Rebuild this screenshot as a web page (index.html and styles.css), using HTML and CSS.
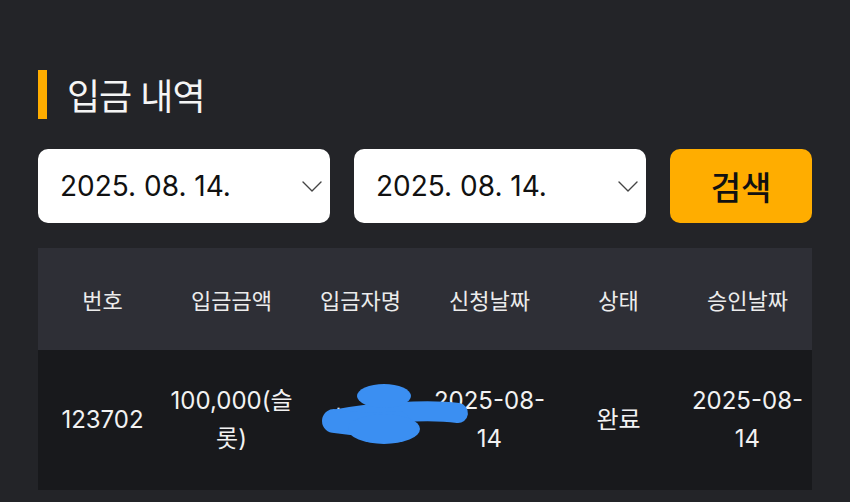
FILE: index.html
```html
<!DOCTYPE html>
<html lang="ko">
<head>
    <meta charset="UTF-8">
    <title>입금 내역</title>
    <link rel="stylesheet" href="styles.css">
</head>
<body>
    <div class="container">
        <h1 class="title">입금 내역</h1>

        <div class="filters">
            <div class="date-select">
                <span>2025. 08. 14.</span>
                <svg class="chevron" width="20" height="11" viewBox="0 0 20 11">
                    <path d="M1 1 L10 10 L19 1" fill="none" stroke="#444" stroke-width="1.4" stroke-linecap="round" stroke-linejoin="round"/>
                </svg>
            </div>
            <div class="date-select">
                <span>2025. 08. 14.</span>
                <svg class="chevron" width="20" height="11" viewBox="0 0 20 11">
                    <path d="M1 1 L10 10 L19 1" fill="none" stroke="#444" stroke-width="1.4" stroke-linecap="round" stroke-linejoin="round"/>
                </svg>
            </div>
            <button class="search-btn">검색</button>
        </div>

        <table class="history">
            <thead>
                <tr>
                    <th>번호</th>
                    <th>입금금액</th>
                    <th>입금자명</th>
                    <th>신청날짜</th>
                    <th>상태</th>
                    <th>승인날짜</th>
                </tr>
            </thead>
            <tbody>
                <tr>
                    <td>123702</td>
                    <td>100,000(슬롯)</td>
                    <td class="name-cell">
                        홍길동
                        <svg class="scribble" width="160" height="80" viewBox="0 0 160 80">
                            <path d="M20 40 C 50 34, 110 30, 140 34" fill="none" stroke="#3b8ff2" stroke-width="20" stroke-linecap="round"/>
                            <path d="M16 42 C 40 46, 60 46, 80 44" fill="none" stroke="#3b8ff2" stroke-width="24" stroke-linecap="round"/>
                            <ellipse cx="66" cy="17" rx="27" ry="12" fill="#3b8ff2"/>
                            <ellipse cx="66" cy="50" rx="36" ry="15" fill="#3b8ff2"/>
                        </svg>
                    </td>
                    <td>2025-08-14</td>
                    <td>완료</td>
                    <td>2025-08-14</td>
                </tr>
            </tbody>
        </table>
    </div>
</body>
</html>
```

FILE: styles.css
```css
body {
    margin: 0;
    background-color: #232428;
    font-family: Inter, "Noto Sans CJK KR", sans-serif;
    color: #f2f2f2;
}
.container {
    padding: 70px 38px 0 38px;
}
.title {
    margin: 0;
    height: 49px;
    border-left: 9px solid #ffad00;
    padding-left: 20px;
    font-family: "Noto Sans CJK KR", sans-serif;
    font-size: 36px;
    font-weight: 400;
    line-height: 49px;
    color: #f5f5f5;
    letter-spacing: -1px;
}
.filters {
    display: flex;
    gap: 24px;
    margin-top: 30px;
    height: 74px;
}
.date-select {
    flex: 0 0 292px;
    display: flex;
    align-items: center;
    justify-content: space-between;
    box-sizing: border-box;
    padding: 0 8px 0 22px;
    background: #ffffff;
    border-radius: 10px;
    color: #111;
    font-size: 28px;
}
.search-btn {
    flex: 1;
    border: none;
    border-radius: 10px;
    background: #ffad00;
    color: #111;
    font-family: "Noto Sans CJK KR", sans-serif;
    font-size: 33px;
    font-weight: 500;
    padding: 0;
}
.history {
    width: 100%;
    margin-top: 25px;
    border-collapse: collapse;
    table-layout: fixed;
}
.history th {
    height: 102px;
    background: #2e2f36;
    color: #ececec;
    font-family: "Noto Sans CJK KR", sans-serif;
    font-size: 22px;
    font-weight: 400;
    padding: 0;
}
.history td {
    height: 140px;
    background: #18191c;
    text-align: center;
    font-size: 24px;
    line-height: 38px;
    padding: 0 2px;
}
.name-cell {
    position: relative;
}
.scribble {
    position: absolute;
    left: 22px;
    top: 29px;
}
```
